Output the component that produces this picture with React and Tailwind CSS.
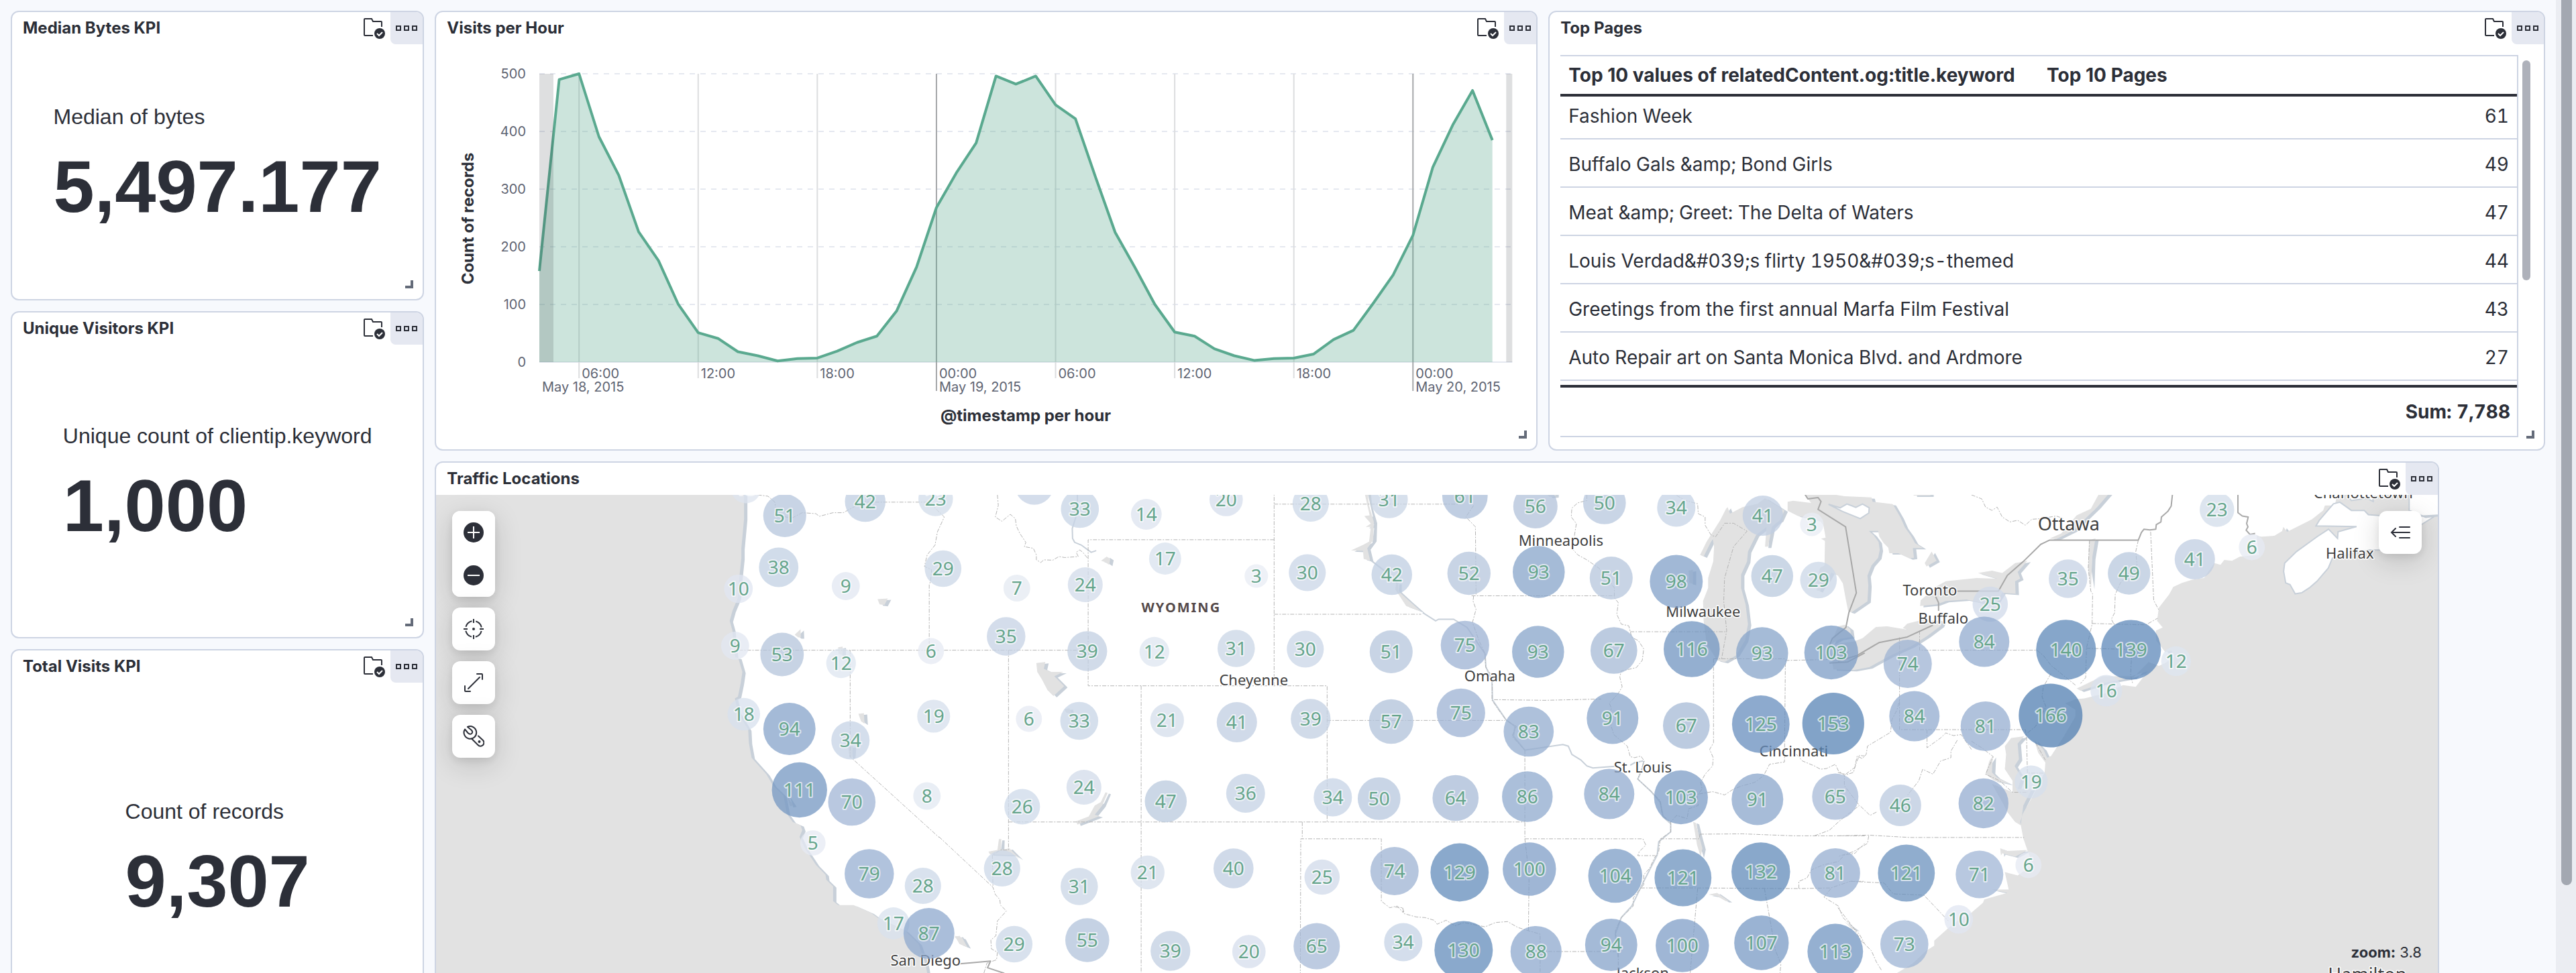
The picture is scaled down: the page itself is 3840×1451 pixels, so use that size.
import React from "react";

const INTER = "font-['Inter',sans-serif]";

/* ---------- icons ---------- */

function FolderCheckIcon() {
  return (
    <svg viewBox="0 0 32 32" className="size-8" fill="none" aria-hidden="true">
      <path d="M14 27H2a1 1 0 0 1-1-1V3a1 1 0 0 1 1-1h10l2 4h12a1 1 0 0 1 1 1v7" stroke="#2c2f38" strokeWidth="2" />
      <circle cx="24" cy="24" r="8" fill="#2c2f38" />
      <path d="M20 24l3 3 5-5" stroke="#fff" strokeWidth="2" />
    </svg>
  );
}

function BoxesIcon() {
  return (
    <svg viewBox="0 0 32 32" className="size-8" fill="none" stroke="#2c2f38" strokeWidth="2" aria-hidden="true">
      <rect x="1" y="13" width="6" height="6" />
      <rect x="13" y="13" width="6" height="6" />
      <rect x="25" y="13" width="6" height="6" />
    </svg>
  );
}

function PlusIcon() {
  return (
    <svg viewBox="0 0 32 32" className="size-8" fill="none" aria-hidden="true">
      <circle cx="16" cy="16" r="15" fill="#2c2f38" />
      <path d="M16 7v18M7 16h18" stroke="#fff" strokeWidth="2" />
    </svg>
  );
}

function MinusIcon() {
  return (
    <svg viewBox="0 0 32 32" className="size-8" fill="none" aria-hidden="true">
      <circle cx="16" cy="16" r="15" fill="#2c2f38" />
      <path d="M7 16h18" stroke="#fff" strokeWidth="2" />
    </svg>
  );
}

function CrosshairIcon() {
  return (
    <svg viewBox="0 0 32 32" className="size-8" fill="none" stroke="#2c2f38" strokeWidth="2" aria-hidden="true">
      <circle cx="16" cy="16" r="12" strokeDasharray="12.85 6" strokeDashoffset="-3" />
      <path d="M16 1v6M16 25v6M1 16h6M25 16h6" />
      <circle cx="16" cy="16" r="2" fill="#2c2f38" stroke="none" />
    </svg>
  );
}

function ExpandIcon() {
  return (
    <svg viewBox="0 0 32 32" className="size-8" fill="none" stroke="#2c2f38" strokeWidth="2" strokeLinecap="round" aria-hidden="true">
      <path d="M21 3h7a1 1 0 0 1 1 1v7M11 29H4a1 1 0 0 1-1-1v-7M25 8L8 25" />
    </svg>
  );
}

function WrenchIcon() {
  return (
    <svg viewBox="0 0 32 32" className="size-8" fill="none" stroke="#2c2f38" strokeWidth="2" strokeLinejoin="round" strokeLinecap="round" aria-hidden="true">
      <path d="M3 5.500l4.500 5.500q3 3 5.500 1t0-5L7 2a9.300 9.300 0 1 1-4 3.500Z" />
      <path d="M13 19.500L22.500 29a5 5 0 0 0 7.500-7L23 15.500" />
      <circle cx="24.500" cy="24" r="2" fill="#2c2f38" stroke="none" />
    </svg>
  );
}

function CollapseLegendIcon() {
  return (
    <svg viewBox="0 0 32 32" className="size-8" fill="none" stroke="#2c2f38" strokeWidth="2" strokeLinecap="round" aria-hidden="true">
      <path d="M15 8h15M3 16h27M15 24h15M9 10l-6 6 6 6" />
    </svg>
  );
}

/* ---------- panels ---------- */

function Panel({ title, className, resizable = true, children }) {
  return (
    <section className={`relative flex flex-col overflow-hidden rounded-xl border-2 border-[#cdd4e3] bg-white ${className}`}>
      <header className="flex h-12 shrink-0 items-center pl-4">
        <h2 className="flex-1 text-2xl font-bold">{title}</h2>
        <button type="button" aria-label="Saved in library" className="mr-2 flex size-8 items-center justify-center">
          <FolderCheckIcon />
        </button>
        <button
          type="button"
          aria-label="Panel options"
          className="flex size-12 items-center justify-center rounded-bl-lg bg-[#e5e8f1]"
        >
          <BoxesIcon />
        </button>
      </header>
      {children}
      {resizable && <span className="absolute right-3.5 bottom-4 size-3 border-r-4 border-b-4 border-[#646b79]" />}
    </section>
  );
}

function Kpi({ label, value }) {
  return (
    <div className="flex flex-1 items-center justify-center pb-6 font-['Liberation_Sans',Arial,sans-serif]">
      <div className="flex flex-col gap-5">
        <p className="text-[32px] leading-12">{label}</p>
        <p className="text-[110px] leading-[120px] font-bold">{value}</p>
      </div>
    </div>
  );
}

/* ---------- visits per hour ---------- */

const VISITS = [
  158, 490, 500, 391, 324, 226, 176, 100, 51, 41, 18, 11, 2, 6, 7, 19, 34, 45, 89, 165, 268, 328, 380, 496, 482,
  496, 446, 422, 322, 225, 164, 100, 52, 45, 23, 11, 3, 6, 7, 14, 39, 55, 102, 151, 220, 338, 411, 471, 385,
];
const X0 = 154;
const Y0 = 474;
const STEP = 29.6;
const hourX = (i) => X0 + i * STEP;
const countY = (v) => Y0 - v * 0.86;
const TICKS = [
  { i: 2, label: "06:00" },
  { i: 8, label: "12:00" },
  { i: 14, label: "18:00" },
  { i: 20, label: "00:00", date: "May 19, 2015" },
  { i: 26, label: "06:00" },
  { i: 32, label: "12:00" },
  { i: 38, label: "18:00" },
  { i: 44, label: "00:00", date: "May 20, 2015" },
];

function VisitsChart() {
  const line = VISITS.map((v, i) => `${hourX(i)},${countY(v)}`).join(" L");
  const right = hourX(49);
  return (
    <svg viewBox="0 0 1640 604" className={`h-auto w-full ${INTER}`} role="img" aria-label="Count of records per hour">
      {[0, 100, 200, 300, 400, 500].map((v) => (
        <g key={v}>
          <line
            x1={X0}
            x2={right}
            y1={countY(v)}
            y2={countY(v)}
            stroke="#e5e8f0"
            strokeWidth="2"
            strokeDasharray={v ? "8 8" : undefined}
          />
          <text x="134" y={countY(v) + 7} textAnchor="end" fontSize="20" fill="#5f6573">
            {v}
          </text>
        </g>
      ))}
      {TICKS.map(({ i, label, date }) => (
        <g key={i}>
          <line
            x1={hourX(i)}
            x2={hourX(i)}
            y1={countY(500)}
            y2={date ? 517 : 498}
            stroke={date ? "#a6a8aa" : "#dcdddf"}
            strokeWidth="2"
          />
          <text x={hourX(i) + 4} y="498" fontSize="20" fill="#5f6573">
            {label}
          </text>
          {date && (
            <text x={hourX(i) + 4} y="518" fontSize="20" fill="#5f6573">
              {date}
            </text>
          )}
        </g>
      ))}
      <text x={X0 + 4} y="518" fontSize="20" fill="#5f6573">
        May 18, 2015
      </text>
      <path d={`M${X0},${Y0} L${line} L${hourX(48)},${Y0}Z`} fill="#57a78b" fillOpacity="0.3" />
      <path d={`M${line}`} fill="none" stroke="#5aa98f" strokeWidth="4" strokeLinejoin="round" />
      <rect x={X0} y={countY(500)} width="21" height="430" fill="#343741" fillOpacity="0.16" />
      <rect x={right - 9} y={countY(500)} width="9" height="430" fill="#343741" fillOpacity="0.16" />
      <text x="879" y="562" textAnchor="middle" fontSize="24" fontWeight="700" fill="#2c2f38">
        @timestamp per hour
      </text>
      <text
        transform="translate(56 260) rotate(-90)"
        textAnchor="middle"
        fontSize="24"
        fontWeight="700"
        fill="#2c2f38"
      >
        Count of records
      </text>
    </svg>
  );
}

/* ---------- top pages ---------- */

const PAGES = [
  ["Fashion Week", 61],
  ["Buffalo Gals &amp; Bond Girls", 49],
  ["Meat &amp; Greet: The Delta of Waters", 47],
  ["Louis Verdad&#039;s flirty 1950&#039;s-themed", 44],
  ["Greetings from the first annual Marfa Film Festival", 43],
  ["Auto Repair art on Santa Monica Blvd. and Ardmore", 27],
];

function TopPages() {
  return (
    <div className="flex gap-1.5 pt-4 pr-5 pl-4">
      <table className="flex-1 table-fixed border-separate border-spacing-0 border-t-2 border-r-2 border-b-2 border-[#cdd4e3] text-[28px]">
        <colgroup>
          <col className="w-1/2" />
          <col className="w-1/2" />
        </colgroup>
        <thead>
          <tr className="h-15 text-left font-bold">
            <th className="border-b-4 border-[#2c2f38] px-3">Top 10 values of relatedContent.og:title.keyword</th>
            <th className="border-b-4 border-[#2c2f38] px-3">Top 10 Pages</th>
          </tr>
        </thead>
        <tbody className="tabular-nums">
          {PAGES.map(([page, count], i) => (
            <tr key={page} className={i ? "h-18" : "h-16 align-top"}>
              <td className="border-b-2 border-[#cdd4e3] px-3 pt-2 pb-1">{page}</td>
              <td className="border-b-2 border-[#cdd4e3] px-3 pt-2 pb-1 text-right">{count}</td>
            </tr>
          ))}
        </tbody>
        <tfoot className="tabular-nums">
          <tr className="h-1.5">
            <td colSpan={2} />
          </tr>
          <tr className="h-19 font-bold">
            <td colSpan={2} className="border-t-4 border-[#2c2f38] px-2.5 text-right">
              Sum: 7,788
            </td>
          </tr>
        </tfoot>
      </table>
      <div className="mt-2 h-82 w-3 rounded-full bg-[#aeb1ba]" />
    </div>
  );
}

/* ---------- traffic map ---------- */

// Base map drawn in sheets, each with its own origin and scale.
const SHEETS = [
  {
    transform: "translate(640 680) scale(0.5102 0.4917)",
    water: [
      "M0 100 L920 100 L920 190 L912 280 L912 310 L906 370 L902 430 L886 470 L878 500 L886 530 L888 560 L894 610 L903 612 L915 655 L910 690 L902 730 L893 735 L903 780 L932 830 L934 870 L942 915 L985 965 L1005 1000 L1035 1030 L1045 1085 L1062 1110 L1085 1120 L1090 1135 L1082 1155 L1098 1190 L1130 1240 L1158 1270 L1160 1285 L1180 1305 L1180 1350 L1195 1362 L1240 1362 L1290 1385 L1310 1400 L1350 1420 L1390 1440 L1430 1480 L1450 1540 L1455 1568 L1480 1750 L0 1750Z",
      "M1310 434 L1340 432 L1330 452 L1316 450Z",
      "M1068 542 L1085 525 L1086 550 L1078 550Z",
      "M1195 580 L1208 578 L1208 604 L1196 600Z",
      "M1254 782 L1270 780 L1272 812 L1262 805Z",
      "M1224 880 L1238 880 L1236 912 L1228 915Z",
      "M1535 1458 L1550 1455 L1566 1482 L1552 1476Z",
      "M1045 1030 L1064 1060 L1054 1062Z",
    ],
    land: [],
    borders: [
      "M960 118 L990 122 L1010 140 L1015 180 L1060 188 L1090 172 L1130 175 L1140 183 L1180 172 L1210 172 L1240 155 L1270 140 L1465 140 L1480 160 L1505 185 L1485 230 L1478 270 L1455 300 L1447 335 L1468 345 L1465 380 L1461 390 V589",
      "M905 589 H1490",
      "M1230 589 V912 L1490 1157",
    ],
    nations: [],
    rivers: [],
  },
  {
    transform: "translate(1400 680) scale(0.4464 0.4917)",
    water: [
      "M541 318 L560 305 L572 312 L568 330 L555 322Z",
      "M325 628 L355 625 L350 645 L372 655 L415 655 L385 668 L418 698 L382 728 L362 710 L345 680 L328 655Z",
      "M418 767 L436 765 L442 782 L425 778Z",
      "M458 1108 L500 1093 L520 1060 L540 1050 L556 1020 L563 1022 L545 1060 L520 1088 L536 1092 L500 1105 L462 1118Z",
      "M165 1200 L195 1195 L200 1162 L208 1162 L207 1195 L235 1190 L270 1222 L250 1210 L230 1210 L170 1208Z",
      "M1418 100 L1430 100 L1436 150 L1452 200 L1450 255 L1430 280 L1440 318 L1418 312 L1416 288 L1376 286 L1415 270 L1436 260 L1442 215 L1425 215 L1442 205 L1420 182 L1438 180Z",
      "M53 1455 L78 1462 L95 1490 L68 1480Z",
      "M1526 385 L1534 385 L1534 410 L1570 440 L1610 472 L1560 455 L1524 405Z",
    ],
    land: [],
    borders: [
      "M17 589 H498",
      "M232 589 V1195 L205 1195 L178 1210 L180 1308",
      "M1119 254 H498 V697 H1296 V1110",
      "M1119 100 V697",
      "M1119 146 H1740",
      "M1119 480 H1610",
      "M675 697 V1700",
      "M232 1110 H1957",
      "M1213 1110 V1161",
      "M1296 802 H1890",
      "M1206 1700 L1208 1161 H1477 V1350 L1505 1370 L1530 1365 L1550 1385 L1548 1370",
      "M195 118 L198 150 L188 185 L210 198 L238 177 L255 190 L258 212 L270 235 L290 262 L285 275 L315 280 L325 300 L325 315 L340 323 L350 315 L380 316 L400 305 L420 308 L465 305 L458 292 L470 285 L480 292 L498 312",
      "M0 1155 L180 1308 L188 1330 L203 1345 L205 1362 L225 1380 L195 1410 L190 1455 L173 1468 L175 1495 L195 1505 L192 1528 L160 1538 L150 1568",
    ],
    nations: ["M70 1540 L172 1532 L162 1552 L215 1568 L260 1590"],
    rivers: ["M462 100 V170 L445 220 L446 250 L453 262 L475 270 L508 292 L525 287", "M1440 315 L1490 350 L1530 385"],
  },
  {
    transform: "translate(2080 680) scale(0.4464 0.4917)",
    water: [
      "M1110 155 L1118 175 L1160 155 L1210 145 L1235 128 L1300 165 L1285 195 L1270 205 L1258 215 L1245 275 L1235 275 L1240 215 L1205 240 L1178 290 L1175 320 L1155 360 L1155 400 L1170 450 L1178 510 L1168 560 L1138 605 L1100 625 L1075 620 L1040 570 L1030 500 L1028 440 L1045 400 L1045 370 L1062 320 L1065 275 L1060 250 L1030 305 L1018 300 L1040 260 L1085 195 L1105 160Z",
      "M980 348 L994 345 L994 388 L982 385Z",
      "M995 1110 L1004 1113 L1014 1150 L1026 1190 L1020 1215 L1008 1180Z",
      "M1047 1330 L1075 1325 L1114 1350 L1104 1350 L1075 1335Z",
      "M1500 1412 L1540 1438 L1526 1435Z",
      "M500 110 H535 V122 L515 124Z",
    ],
    land: [],
    borders: [
      "M262 150 L236 185 L268 215 L270 424",
      "M255 424 H732",
      "M262 424 L260 440 L270 465 L258 505 L280 560 L300 600 L302 640 L325 670 L323 740 L345 770 L372 803 L405 820 L390 850 L433 892",
      "M640 118 L640 135 L610 142 L590 158 L588 185 L605 205 L597 250 L590 280 L610 300 L640 315 L680 340 L732 400 L732 430 L745 445 L740 480 L755 510 L780 515 L790 550 L812 560 L830 585 L825 620 L805 642 L755 652 L750 670 L758 700 L745 720 L715 750 L722 765 L715 800 L730 845 L775 880 L785 912 L800 915 L820 910 L832 925 L810 980 L855 1018 L885 1045 L892 1090 L920 1110 L920 1140 L885 1162 L880 1200 L865 1220 L850 1250 L830 1270 L830 1300 L795 1340 L795 1365 L755 1400 L735 1440 L745 1500 V1568",
      "M785 533 H1105",
      "M330 739 L500 741 L688 737",
      "M433 892 V1161 L447 1270 L445 1440",
      "M433 1161 H827 L837 1180 L815 1200 L810 1212 H868",
      "M1063 615 V870 L1050 890 L1062 915 L1060 940 L1035 965 L1020 990 L1025 1010 L1008 1030 L1012 1060 L980 1070 L975 1100 L940 1090 L920 1110",
      "M1015 1025 L1060 1018 L1100 1028 L1130 1010 L1160 1000 L1200 990 L1230 970 L1250 935 L1300 928 L1303 620",
      "M1340 905 L1360 925 L1400 940 L1420 950 L1440 948 L1470 935 L1480 955 L1500 968 L1530 960 L1540 930 L1550 908 L1568 910",
      "M1063 615 H1300 L1308 620 L1460 617",
      "M1018 1147 L1160 1146 L1330 1152 H1568",
      "M885 1161 H1015 L1018 1147",
      "M820 1310 H1000 L1350 1312 L1455 1310 L1520 1290 H1568",
      "M1010 1312 L985 1568",
      "M1233 1312 L1270 1500 L1288 1540 L1285 1568",
      "M1348 1312 V1290 L1375 1280 L1390 1255 L1430 1240 L1480 1230 L1500 1210 L1535 1205 L1568 1175",
      "M1400 1152 L1450 1135 L1480 1110 L1500 1095 L1550 1060 L1500 1000 V968",
      "M1455 1312 L1432 1338 L1480 1365 L1495 1400 L1530 1430 L1550 1450 L1568 1480",
      "M0 1368 L25 1370 L30 1388 L70 1398 L100 1400 L130 1408 L140 1420 L170 1408 L200 1425 L230 1415 L300 1428 L335 1415 L375 1412 L410 1430 L445 1440 L484 1450 V1600",
      "M484 1503 H740",
      "M940 120 L970 135 L1010 145 L1012 175 L1035 185 L1035 210 L1055 240 L1070 245 L1100 204 H1130 L1175 228 L1130 275 L1100 370 L1097 440 L1107 530 L1090 615",
    ],
    nations: [
      "M1368 116 L1378 130 L1412 126 L1422 138 L1412 162 L1504 215 L1540 415 L1515 475 L1505 520 L1460 553 L1450 575",
      "M1450 628 L1510 625 L1568 597",
    ],
    rivers: [
      "M92 475 L135 500 L145 495 L195 495 L240 520 L270 560 L300 600 L303 640 L323 680 L325 740 L370 800 L400 820 L395 850 L433 892 L560 875 L578 880 L590 905 L620 922 L640 940 L660 946 L735 941",
      "M830 925 L825 950 L810 980 L855 1018 L885 1050 L895 1095 L920 1115 L920 1140 L880 1170 L875 1210 L830 1290 L790 1365 L755 1400 L735 1450 L745 1520",
      "M785 938 L800 930 L828 925",
    ],
  },
  {
    transform: "translate(2500 730) scale(0.3333)",
    water: [
      "M495 55 L520 50 L600 60 L650 62 L680 70 L720 85 L780 105 L820 130 L860 100 L858 185 L880 205 L902 235 L907 270 L900 305 L870 340 L852 385 L856 430 L852 500 L780 550 L766 545 L755 490 L742 420 L720 385 L690 372 L675 400 L645 440 L638 455 L625 450 L630 430 L600 425 L630 390 L640 350 L660 340 L662 230 L645 220 L665 215 L655 160 L640 140 L600 130 L540 118 L495 95Z",
      "M555 0 H600 L700 22 L750 30 L870 35 L875 55 L965 65 L1000 125 L1020 170 L1045 205 L1065 240 L1100 262 L1055 262 L1060 305 L1040 308 L990 285 L950 285 L945 260 L925 240 L905 210 L900 185 L858 185 L840 145 L825 133 L760 100 L680 72 L600 60Z",
      "M720 612 L750 605 L775 625 L780 660 L730 668 L690 690Z",
      "M690 740 L715 690 L790 680 L830 665 L890 615 L940 612 L1035 628 L1010 620 L1030 600 L1090 585 L1190 588 L1180 610 L1120 655 L1050 700 L960 740 L860 795 L790 808 L700 805Z",
    ],
    land: ["M678 66 L730 82 L760 65 L780 72 L800 80 L830 65 L860 82 L858 105 L820 130 L740 98Z"],
    borders: [],
    nations: [],
    rivers: [],
  },
  {
    transform: "translate(2740 680) scale(0.3827 0.4917)",
    water: [
      "M338 325 L365 290 L384 318 L345 335Z",
      "M385 395 L420 380 L540 370 L620 372 L545 355 L600 348 L640 355 L690 325 L738 318 L700 352 L710 372 L690 380 L692 418 L640 415 L620 440 L560 445 L500 435 L420 440 L385 450 L320 455 L322 438Z",
      "M825 250 L870 235 L930 180 L985 160 L1020 110 L1060 110 L1010 155 L970 185 L920 225 L850 252Z",
      "M978 255 L1003 250 L990 310 L986 400 L975 345Z",
      "M295 110 H360 V120 H295Z",
      "M2350 100 H1950 L1935 150 L1897 150 L1890 165 L1846 192 L1750 230 L1735 215 L1730 228 L1700 242 L1646 245 L1630 240 L1640 300 L1566 305 L1535 318 L1505 315 L1490 330 L1466 325 L1426 370 L1380 375 L1340 385 L1306 397 L1290 420 L1250 460 L1243 500 L1265 520 L1238 530 L1240 560 L1275 595 L1300 590 L1310 610 L1270 630 L1210 650 L1160 700 L1110 695 L1050 718 L960 735 L925 738 L885 750 L925 770 L925 790 L880 850 L830 910 L815 915 L800 890 L765 862 L780 900 L808 930 L805 960 L760 1030 L720 1085 L710 1110 L722 1160 L740 1200 L760 1240 L700 1272 L650 1262 L665 1315 L600 1315 L660 1325 L570 1345 L565 1355 L520 1385 L480 1402 L430 1432 L375 1470 L375 1485 L345 1500 L290 1540 L230 1568 L225 1750 H2350Z",
      "M930 705 L1030 668 L1140 668 L1260 640 L1210 625 L1150 672 L1040 688 L945 712Z",
      "M675 855 L725 850 L700 872 L705 920 L688 940 L715 975 L700 1010 L755 1010 L722 1060 L712 1120 L690 1110 L660 1080 L640 1050 L600 995 L680 1020 L680 985 L650 950 L655 905 L650 880Z",
      "M575 965 L590 925 L603 910 L600 960 L620 975 L670 995 L610 985Z",
      "M632 1190 L635 1212 L640 1205 L690 1215 L740 1195 L660 1198Z",
    ],
    land: [
      "M1911 222 L1946 250 L1948 230 L2020 214 L1862 212 L1875 195 L1930 145 L1955 140 L2000 165 L2050 165 L2066 178 L2190 186 L2330 180 L2116 285 L2066 285 L1926 310 L1910 340 L1866 380 L1836 400 L1806 415 L1781 418 L1761 390 L1744 385 L1736 350 L1740 325 L1786 290 L1866 245Z",
      "M2225 100 H2350 V180 L2290 186 L2225 165Z",
      "M1960 100 H2080 L2085 138 L2060 128 L2000 135Z",
    ],
    borders: [
      "M520 118 L560 130 L575 155 L600 165 L620 155 L640 185 L670 200 L700 195 L730 210 L755 192 L790 190 L850 182 L880 190",
      "M318 530 V589 H775 L800 605 L830 635 L925 695",
      "M240 550 V830 H730 L735 860 L738 962 H805",
      "M347 830 V885 L400 855 L420 840 L450 848 L480 845 L520 890",
      "M520 865 L560 885 L605 912 L575 965 L630 985 L680 1020 H740",
      "M465 862 L440 895 L440 915 L400 925 L370 965 L330 950 L315 985 L270 1030",
      "M150 1080 L125 1090 L85 1060",
      "M0 960 L30 965 L65 945 L75 910 L95 918 L110 905 L115 880 L205 838 L210 800 L230 770 L240 740",
      "M0 1152 L120 1150 L280 1157 H725",
      "M120 1152 L115 1175 L60 1200 L0 1215",
      "M50 1290 L180 1295 L215 1328 L335 1332 L430 1410",
      "M990 508 L1200 512 L1245 492",
      "M980 255 L975 340 L985 410 L992 418 L990 510 L968 583 L965 672 L945 690",
      "M968 583 L1145 587 L1140 665 L1148 690",
      "M1170 255 L1160 290 L1165 330 L1100 385 L1080 420 L1078 475 L1065 495 L1075 510",
      "M1218 230 L1230 438 L1252 470",
      "M830 660 L800 700 L795 730 L810 760 L770 820 L730 845",
      "M0 1370 L60 1430 L90 1470 L130 1500 L150 1535 L170 1560",
      "M770 870 L808 922",
    ],
    nations: [
      "M0 622 L75 605 L160 566 L270 549 L370 513",
      "M380 425 L392 445 V470",
      "M460 410 H625 L660 362 L722 320 L790 268 L825 255 H1170 L1182 232 L1192 222 L1215 224 L1238 222 L1240 208 L1258 200 L1260 185 L1285 168 L1298 152 L1303 116",
      "M1558 100 V172 L1575 182 L1598 185 L1592 205 L1597 215 L1590 225 L1605 238 L1625 235",
    ],
    rivers: [],
  },
];

const PLACES = [
  ["Minneapolis", 2327, 814, 22],
  ["Milwaukee", 2539, 920, 22],
  ["Omaha", 2221, 1016, 22],
  ["Cincinnati", 2674, 1128, 22],
  ["St. Louis", 2449, 1152, 22],
  ["Cheyenne", 1869, 1022, 22],
  ["Toronto", 2877, 888, 22],
  ["Buffalo", 2897, 930, 22],
  ["Halifax", 3503, 833, 22],
  ["Charlottetown", 3523, 743, 22],
  ["San Diego", 1380, 1440, 22],
  ["Jackson", 2449, 1459, 22],
  ["Ottawa", 3084, 791, 27],
  ["Hamilton", 3529, 1463, 27],
];

const HITS = [
  [13, 1112, 728], [51, 1170, 769], [42, 1290, 748], [23, 1395, 744], [38, 1161, 846], [29, 1406, 848],
  [10, 1101, 878], [9, 1261, 874], [9, 1096, 963], [53, 1166, 976], [12, 1254, 989], [6, 1388, 971],
  [18, 1109, 1065], [94, 1177, 1087], [34, 1268, 1104], [19, 1392, 1068], [111, 1192, 1178], [70, 1270, 1196],
  [8, 1382, 1187], [5, 1212, 1257], [79, 1296, 1303], [28, 1376, 1321], [17, 1332, 1377], [87, 1385, 1392],
  [35, 1542, 724], [33, 1610, 759], [14, 1709, 767], [20, 1828, 745], [28, 1954, 751], [31, 2071, 745],
  [17, 1737, 833], [3, 1873, 859], [30, 1949, 854], [42, 2075, 857], [7, 1516, 877], [24, 1618, 872],
  [35, 1500, 949], [39, 1621, 971], [12, 1721, 972], [31, 1843, 967], [30, 1946, 968], [51, 2074, 972],
  [6, 1534, 1072], [33, 1609, 1075], [21, 1740, 1074], [41, 1844, 1077], [39, 1954, 1072], [57, 2074, 1076],
  [26, 1524, 1203], [24, 1616, 1174], [47, 1738, 1195], [36, 1857, 1183], [34, 1987, 1189], [50, 2056, 1191],
  [28, 1494, 1295], [31, 1609, 1322], [21, 1711, 1301], [40, 1839, 1295], [25, 1971, 1308], [74, 2079, 1299],
  [29, 1512, 1408], [55, 1621, 1402], [39, 1745, 1418], [20, 1862, 1419], [65, 1963, 1411], [34, 2092, 1405],
  [61, 2184, 740], [56, 2289, 755], [50, 2392, 750], [34, 2499, 757], [41, 2628, 769], [3, 2701, 782],
  [52, 2190, 855], [93, 2294, 853], [51, 2402, 862], [98, 2499, 867], [47, 2642, 859], [29, 2711, 865],
  [75, 2184, 962], [93, 2293, 972], [67, 2406, 970], [116, 2522, 968], [93, 2627, 974], [103, 2730, 973],
  [75, 2178, 1063], [83, 2279, 1091], [91, 2404, 1071], [67, 2514, 1082], [125, 2625, 1080], [153, 2733, 1079],
  [64, 2170, 1190], [86, 2277, 1188], [84, 2399, 1184], [103, 2506, 1189], [91, 2620, 1192], [65, 2736, 1188],
  [129, 2176, 1301], [100, 2280, 1296], [104, 2408, 1306], [121, 2509, 1309], [132, 2625, 1300], [81, 2736, 1302],
  [130, 2182, 1417], [88, 2290, 1419], [94, 2402, 1409], [100, 2508, 1410], [107, 2626, 1406], [113, 2736, 1419],
  [23, 3305, 760], [6, 3357, 816], [41, 3272, 834], [35, 3083, 863], [49, 3174, 855], [25, 2967, 901],
  [84, 2958, 957], [74, 2844, 990], [140, 3080, 969], [139, 3177, 969], [12, 3244, 986], [16, 3140, 1030],
  [84, 2854, 1068], [81, 2960, 1083], [166, 3057, 1067], [19, 3028, 1166], [46, 2833, 1201], [82, 2957, 1198],
  [121, 2842, 1302], [71, 2951, 1304], [6, 3024, 1290], [10, 2920, 1371], [73, 2839, 1408],
];

const RAMP = [
  [3, 232, 236, 244],
  [30, 202, 214, 231],
  [51, 182, 198, 220],
  [75, 156, 178, 211],
  [100, 127, 158, 199],
  [129, 99, 140, 187],
  [166, 82, 127, 178],
];

function hitColor(v) {
  const k = RAMP.findIndex((stop, i) => i > 0 && v <= stop[0]);
  const a = RAMP[k - 1];
  const b = RAMP[k];
  const t = (v - a[0]) / (b[0] - a[0]);
  const mix = (j) => Math.round(a[j] + (b[j] - a[j]) * t);
  return `rgb(${mix(1)} ${mix(2)} ${mix(3)})`;
}

const hitRadius = (v) => 17.5 + 2.69 * (Math.sqrt(v) - Math.sqrt(3));

function LineLayer({ layer, ...line }) {
  return SHEETS.map((sheet, s) => (
    <g key={s} transform={sheet.transform} fill="none" {...line}>
      {sheet[layer].map((d) => (
        <path key={d} d={d} vectorEffect="non-scaling-stroke" />
      ))}
    </g>
  ));
}

function TrafficMap() {
  return (
    <svg
      viewBox="650 738 2984 772"
      preserveAspectRatio="xMidYMin slice"
      className="absolute inset-0 size-full bg-white font-['Noto_Sans',sans-serif]"
      role="img"
      aria-label="Visits by location"
    >
      <g transform="translate(5 2)" fill="#c8d0d9">
        {SHEETS.map((sheet, s) => (
          <path key={s} transform={sheet.transform} d={sheet.water.join("")} />
        ))}
      </g>
      {SHEETS.map((sheet, s) => (
        <path key={s} transform={sheet.transform} d={sheet.water.join("")} fill="#e2e2e2" />
      ))}
      {SHEETS.map((sheet, s) => (
        <path
          key={s}
          transform={sheet.transform}
          d={sheet.land.join("")}
          fill="#fff"
          stroke="#c8d0d9"
          strokeWidth="2"
          vectorEffect="non-scaling-stroke"
        />
      ))}
      <LineLayer layer="rivers" stroke="#c8d0d9" strokeWidth="2" />
      <LineLayer layer="borders" stroke="#b4b4b4" strokeWidth="1" strokeDasharray="6 2 2 2" />
      <LineLayer layer="nations" stroke="#a8a8a8" strokeWidth="2" strokeLinejoin="round" />
      <g textAnchor="middle" fill="#404040" stroke="#fff" strokeWidth="3" strokeLinejoin="round" paintOrder="stroke">
        {PLACES.map(([name, x, y, size]) => (
          <text key={name} x={x} y={y} fontSize={size}>
            {name}
          </text>
        ))}
        <text x="1761" y="913" fontSize="20" fontWeight="700" fill="#554a4a" className="tracking-widest">
          WYOMING
        </text>
      </g>
      {HITS.map(([v, x, y]) => (
        <circle key={`${x}-${y}`} cx={x} cy={y} r={hitRadius(v)} fill={hitColor(v)} fillOpacity="0.75" />
      ))}
      <g
        textAnchor="middle"
        fontSize="28"
        fill="#66a58c"
        stroke="#fff"
        strokeOpacity="0.65"
        strokeWidth="4"
        strokeLinejoin="round"
        paintOrder="stroke"
      >
        {HITS.map(([v, x, y]) => (
          <text key={`${x}-${y}`} x={x} y={y + 10}>
            {v}
          </text>
        ))}
      </g>
    </svg>
  );
}

function MapButton({ label, className = "", children }) {
  return (
    <button type="button" aria-label={label} className={`flex size-16 items-center justify-center rounded-xl bg-white ${className}`}>
      {children}
    </button>
  );
}

const LIFT = "shadow-[0_10px_40px_rgba(0,0,0,0.16),0_4px_12px_rgba(0,0,0,0.08)]";

/* ---------- page ---------- */

export default function App() {
  return (
    <div className={`flex h-screen overflow-hidden bg-[#f7f9fd] text-[#2c2f38] ${INTER}`}>
      <main className="grid flex-1 auto-rows-[40px] grid-cols-[repeat(48,minmax(0,1fr))] gap-4 p-4">
        <Panel title="Median Bytes KPI" className="col-span-8 row-span-8">
          <Kpi label="Median of bytes" value="5,497.177" />
        </Panel>
        <Panel title="Visits per Hour" className="col-span-21 row-span-12">
          <VisitsChart />
        </Panel>
        <Panel title="Top Pages" className="col-[30/span_19] row-span-12">
          <TopPages />
        </Panel>
        <Panel title="Unique Visitors KPI" className="col-span-8 col-start-1 row-span-9 row-start-9">
          <Kpi label="Unique count of clientip.keyword" value="1,000" />
        </Panel>
        <Panel title="Traffic Locations" className="col-[9/span_38] row-[13/span_15]" resizable={false}>
          <div className="relative flex flex-1 items-start justify-between p-6">
            <TrafficMap />
            <div className="relative flex flex-col gap-4">
              <div className={`flex flex-col rounded-xl bg-white ${LIFT}`}>
                <MapButton label="Zoom in">
                  <PlusIcon />
                </MapButton>
                <MapButton label="Zoom out">
                  <MinusIcon />
                </MapButton>
              </div>
              <MapButton label="Fit to data bounds" className={LIFT}>
                <CrosshairIcon />
              </MapButton>
              <MapButton label="Toggle full extent" className={LIFT}>
                <ExpandIcon />
              </MapButton>
              <MapButton label="Map tools" className={LIFT}>
                <WrenchIcon />
              </MapButton>
            </div>
            <div className="relative flex flex-col items-end justify-between self-stretch pb-13">
              <MapButton label="Expand layers panel" className={LIFT}>
                <CollapseLegendIcon />
              </MapButton>
              <p className="text-[22px] leading-7">
                <strong>zoom:</strong> 3.8
              </p>
            </div>
          </div>
        </Panel>
        <Panel title="Total Visits KPI" className="col-span-8 col-start-1 row-[18/span_11]">
          <Kpi label="Count of records" value="9,307" />
        </Panel>
      </main>
      <div className="w-[30px] shrink-0 bg-[#ebedf2] pl-2">
        <div className="h-[91%] w-4 rounded-b-full bg-[#a3a8b1]" />
      </div>
    </div>
  );
}
